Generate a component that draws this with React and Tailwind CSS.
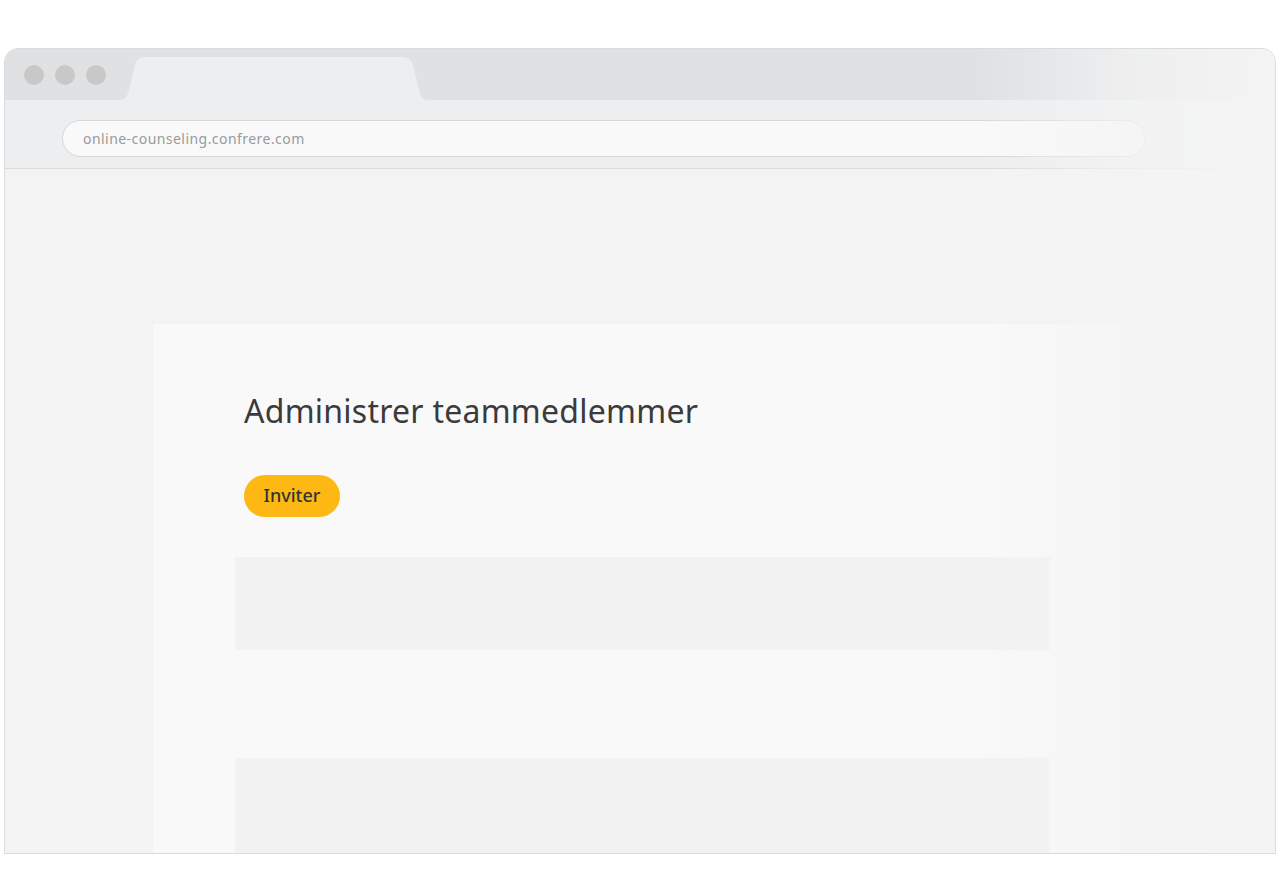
export default function App() {
  return (
    <div className="w-[1280px] h-[896px] bg-white overflow-hidden" style={{ fontFamily: "'Noto Sans', Lato, sans-serif" }}>
      <div className="h-[48px]" />
      <div className="relative ml-[4px] w-[1272px] h-[806px] border border-[#dadbdc] rounded-t-[14px] overflow-hidden bg-[#f3f3f3] flex flex-col">
        {/* Tab bar */}
        <div className="relative h-[51px] bg-[#dfe1e3] flex items-center pl-[19px] gap-[11px] shrink-0">
          <div className="w-[20px] h-[20px] rounded-full bg-[#c8c8c8]" />
          <div className="w-[20px] h-[20px] rounded-full bg-[#c8c8c8]" />
          <div className="w-[20px] h-[20px] rounded-full bg-[#c8c8c8]" />
          <svg className="absolute left-[114px] bottom-0" width="310" height="43" viewBox="0 0 310 43">
            <path d="M0 43 C6 43 8 40 10 33 L16 8 C18 2 21 0 28 0 L282 0 C289 0 292 2 294 8 L300 33 C302 40 304 43 310 43 Z" fill="#eceef0" />
          </svg>
        </div>
        {/* Toolbar */}
        <div className="h-[69px] bg-[#eceef0] border-b border-[#d9dadc] shrink-0 flex items-center pt-[8px] pl-[57px] pr-[130px]">
          <div className="w-full h-[37px] rounded-full border border-[#d5d7d9] bg-[#f9f9f9] flex items-center pl-[20px] text-[14px] text-[#9a9a9a] tracking-[0.45px]">
            online-counseling.confrere.com
          </div>
        </div>
        {/* Page */}
        <div className="flex-1 pt-[155px] pl-[148px]">
          <div className="w-[968px] h-full bg-[#f9f9f9] pt-[66px]">
            <h1 className="pl-[91px] text-[32px] leading-[42px] text-[#3b3b3b] font-normal tracking-[0.25px]">Administrer teammedlemmer</h1>
            <div className="pl-[91px] mt-[43px]">
              <button className="w-[96px] h-[42px] rounded-full bg-[#fdb813] text-[18px] text-[#333] font-medium flex items-center justify-center pb-[2px]">Inviter</button>
            </div>
            <div className="ml-[82px] mt-[40px] w-[815px] h-[93px] bg-[#f2f2f2]" />
            <div className="ml-[82px] mt-[108px] w-[815px] h-[100px] bg-[#f2f2f2]" />
          </div>
        </div>
        {/* right fade overlay */}
        <div className="absolute right-0 top-0 bottom-0 w-[300px] bg-gradient-to-r from-transparent via-[#f4f4f4]/70 to-[#f4f4f4]" />
      </div>
    </div>
  );
}
